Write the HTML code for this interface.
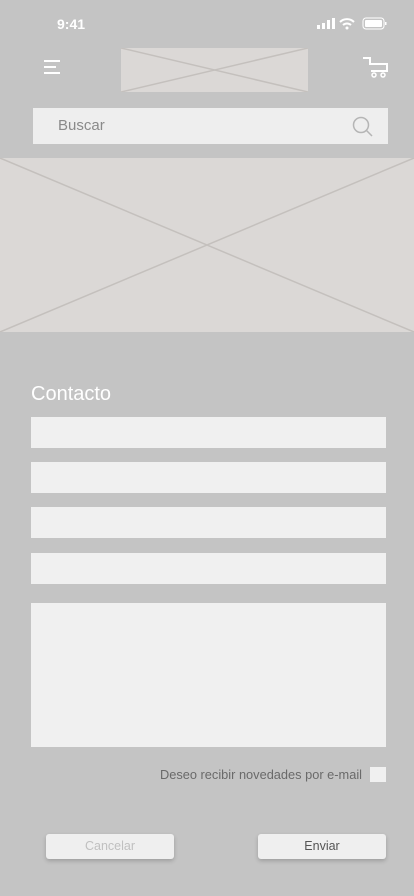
<!DOCTYPE html>
<html><head><meta charset="utf-8"><style>
*{margin:0;padding:0;box-sizing:border-box}
body{width:414px;height:896px;background:#c4c4c4;font-family:"Liberation Sans",sans-serif;position:relative;overflow:hidden}
.a{position:absolute}
.f{background:#f0f0f0}
.btn{position:absolute;top:834px;width:128px;height:25px;border-radius:3px;background:#efefef;box-shadow:0 2px 4px rgba(0,0,0,.2);font-size:12.5px;text-align:center;line-height:25px}
</style></head><body>
<div class="a" style="left:57px;top:16px;font-size:14px;font-weight:bold;color:#fff">9:41</div>
<svg class="a" style="left:316px;top:17px" width="72" height="14" viewBox="0 0 72 14">
<rect x="1" y="8" width="3" height="4" fill="#fff"/><rect x="6" y="6" width="3" height="6" fill="#fff"/><rect x="11" y="3" width="3" height="9" fill="#fff"/><rect x="16" y="1" width="3" height="11" fill="#fff"/>
<path d="M24 5a10 10 0 0 1 14 0M27 8a6 6 0 0 1 8 0" stroke="#fff" stroke-width="2" fill="none"/><circle cx="31" cy="11" r="1.5" fill="#fff"/>
<rect x="47" y="1" width="21" height="11" rx="3" stroke="#fff" fill="none"/><rect x="49" y="3" width="17" height="7" rx="1" fill="#fff"/><rect x="69" y="5" width="1.5" height="3" fill="#fff"/>
</svg>
<svg class="a" style="left:43px;top:59px" width="20" height="16"><path d="M1 2h16M1 8h12M1 14h16" stroke="#fff" stroke-width="2"/></svg>
<svg class="a" style="left:121px;top:48px" width="187" height="44"><rect width="187" height="44" fill="#dbd8d6"/><path d="M0 0L187 44M187 0L0 44" stroke="#c4c0bd" stroke-width="1.5"/></svg>
<svg class="a" style="left:361px;top:56px" width="28" height="22"><path d="M2 2h7v6h17v7H10" stroke="#fff" stroke-width="2" fill="none"/><circle cx="13" cy="19" r="2" fill="none" stroke="#fff" stroke-width="1.5"/><circle cx="22" cy="19" r="2" fill="none" stroke="#fff" stroke-width="1.5"/></svg>
<div class="a f" style="left:33px;top:108px;width:355px;height:36px;background:#eeeeee"></div>
<div class="a" style="left:58px;top:117px;font-size:15px;color:#8a8a8a">Buscar</div>
<svg class="a" style="left:352px;top:116px" width="22" height="22"><circle cx="9" cy="9" r="7.5" stroke="#b5b5b5" stroke-width="1.5" fill="none"/><path d="M14.5 14.5L20 20" stroke="#b5b5b5" stroke-width="1.5"/></svg>
<svg class="a" style="left:0;top:158px" width="414" height="174"><rect width="414" height="174" fill="#dbd8d6"/><path d="M0 174L414 0M0 0L414 174" stroke="#c4c0bd" stroke-width="1.5"/></svg>
<div class="a" style="left:31px;top:383px;font-size:20px;color:#fff">Contacto</div>
<div class="a f" style="left:31px;top:417px;width:355px;height:31px"></div>
<div class="a f" style="left:31px;top:462px;width:355px;height:31px"></div>
<div class="a f" style="left:31px;top:507px;width:355px;height:31px"></div>
<div class="a f" style="left:31px;top:553px;width:355px;height:31px"></div>
<div class="a f" style="left:31px;top:603px;width:355px;height:144px"></div>
<div class="a" style="left:160px;top:767px;font-size:12.8px;color:#6a6a6a">Deseo recibir novedades por e-mail</div>
<div class="a f" style="left:370px;top:767px;width:16px;height:15px"></div>
<div class="btn" style="left:46px;color:#c0c0c0">Cancelar</div>
<div class="btn" style="left:258px;color:#555">Enviar</div>
</body></html>
